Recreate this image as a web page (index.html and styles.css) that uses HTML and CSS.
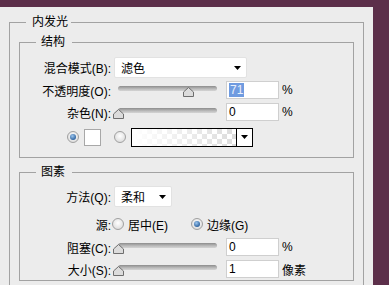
FILE: index.html
```html
<!DOCTYPE html>
<html lang="zh-CN">
<head>
    <meta charset="UTF-8">
    <title>内发光</title>
    <link rel="stylesheet" href="styles.css">
</head>
<body>

    <div class="panel">
        <fieldset class="group">
            <legend class="group-title">内发光</legend>

            <!-- 结构 -->
            <fieldset class="box box-structure">
                <legend class="box-title">结构</legend>

                <div class="row row-tall">
                    <span class="label">混合模式(B):</span>
                    <div class="select select-wide">
                        <span>滤色</span>
                        <svg class="caret" width="7" height="4" viewBox="0 0 7 4"><polygon points="0,0 7,0 3.5,4"/></svg>
                    </div>
                </div>

                <div class="row">
                    <span class="label">不透明度(O):</span>
                    <div class="slider">
                        <div class="track">
                            <svg class="thumb" style="left: 71%" width="11" height="10" viewBox="0 0 11 10"><path d="M5.5 0.5 L10.5 5 V9.5 H0.5 V5 Z"/></svg>
                        </div>
                    </div>
                    <div class="field"><span class="selected">71</span></div>
                    <span class="unit">%</span>
                </div>

                <div class="row">
                    <span class="label">杂色(N):</span>
                    <div class="slider">
                        <div class="track">
                            <svg class="thumb" style="left: 0%" width="11" height="10" viewBox="0 0 11 10"><path d="M5.5 0.5 L10.5 5 V9.5 H0.5 V5 Z"/></svg>
                        </div>
                    </div>
                    <div class="field">0</div>
                    <span class="unit">%</span>
                </div>

                <div class="row row-colors">
                    <span class="radio on"></span>
                    <span class="swatch"></span>
                    <span class="radio radio-gap"></span>
                    <div class="gradient">
                        <div class="gradient-fill"></div>
                        <div class="gradient-arrow">
                            <svg width="7" height="4" viewBox="0 0 7 4"><polygon points="0,0 7,0 3.5,4"/></svg>
                        </div>
                    </div>
                </div>
            </fieldset>

            <!-- 图素 -->
            <fieldset class="box box-elements">
                <legend class="box-title">图素</legend>

                <div class="row">
                    <span class="label">方法(Q):</span>
                    <div class="select select-narrow">
                        <span>柔和</span>
                        <svg class="caret" width="7" height="4" viewBox="0 0 7 4"><polygon points="0,0 7,0 3.5,4"/></svg>
                    </div>
                </div>

                <div class="row row-source">
                    <span class="label">源:</span>
                    <span class="radio radio-first"></span>
                    <span class="option">居中(E)</span>
                    <span class="radio on radio-second"></span>
                    <span class="option">边缘(G)</span>
                </div>

                <div class="row row-choke">
                    <span class="label">阻塞(C):</span>
                    <div class="slider">
                        <div class="track">
                            <svg class="thumb" style="left: 0%" width="11" height="10" viewBox="0 0 11 10"><path d="M5.5 0.5 L10.5 5 V9.5 H0.5 V5 Z"/></svg>
                        </div>
                    </div>
                    <div class="field">0</div>
                    <span class="unit">%</span>
                </div>

                <div class="row">
                    <span class="label">大小(S):</span>
                    <div class="slider">
                        <div class="track">
                            <svg class="thumb" style="left: 0%" width="11" height="10" viewBox="0 0 11 10"><path d="M5.5 0.5 L10.5 5 V9.5 H0.5 V5 Z"/></svg>
                        </div>
                    </div>
                    <div class="field">1</div>
                    <span class="unit">像素</span>
                </div>
            </fieldset>
        </fieldset>
    </div>

</body>
</html>
```

FILE: styles.css
```css
/* General Styles */
* {
    margin: 0;
    padding: 0;
    box-sizing: border-box;
}

body {
    background: #5c2f4a;
    padding-top: 7px;
    font: 12px "Liberation Sans", "Noto Sans CJK SC", sans-serif;
    color: #000;
}

.panel {
    width: 373px;
    height: 278px;
    background: #ececec;
    padding: 7px 0 0 9px;
    overflow: hidden;
}

/* Group boxes */
fieldset {
    border: 1px solid #a2a2a2;
    padding: 0;
    min-inline-size: 0;
}

legend {
    line-height: 16px;
    margin-left: 16px;
}

.group {
    width: 355px;
    padding-bottom: 30px;
}

.group-title {
    padding: 0 3px 0 6px;
}

.box {
    margin: 0 9px;
    padding-top: 5px;
}

.box-title {
    padding: 0 7px 0 5px;
}

.box-structure {
    margin-top: 4px;
    padding-bottom: 7px;
}

.box-elements {
    margin-top: 6px;
}

/* Rows */
.row {
    display: flex;
    align-items: center;
    height: 22px;
}

.row-tall {
    height: 24px;
}

.row-colors {
    height: 26px;
    margin-top: 1px;
    padding-left: 47px;
}

.row-source {
    margin-top: 6px;
}

.row-choke {
    margin-top: 1px;
}

.label {
    width: 91px;
    text-align: right;
    white-space: nowrap;
}

/* Dropdowns */
.select {
    display: flex;
    align-items: center;
    justify-content: space-between;
    height: 21px;
    margin-left: 3px;
    padding: 0 5px 0 6px;
    background: #fff;
    border: 1px solid #e2e2e2;
    border-radius: 2px;
}

.select-wide {
    width: 133px;
}

.select-narrow {
    width: 58px;
}

.caret {
    fill: #000;
    margin-top: 1px;
}

/* Sliders */
.slider {
    width: 109px;
    height: 14px;
    margin-left: 2px;
    padding: 3px 5px 0;
    align-self: center;
}

.track {
    position: relative;
    height: 5px;
    border-radius: 3px;
    background: linear-gradient(#8c8c8c, #bdbdbd 60%, #d4d4d4);
}

.thumb {
    position: absolute;
    top: 1px;
    margin-left: -5px;
    fill: #dcdcdc;
    stroke: #6e6e6e;
    stroke-width: 1;
}

/* Number fields */
.field {
    width: 53px;
    height: 18px;
    margin-left: 4px;
    padding-left: 2px;
    line-height: 16px;
    background: #fff;
    border: 1px solid #cfcfcf;
}

.selected {
    display: inline-block;
    padding: 0 1px;
    background: #6f9be0;
    color: #e8f0fc;
    line-height: 14px;
    margin-top: 1px;
}

.unit {
    margin-left: 3px;
}

/* Radios */
.radio {
    display: flex;
    align-items: center;
    justify-content: center;
    width: 12px;
    height: 12px;
    border-radius: 50%;
    border: 1px solid #a0a0a0;
    background: radial-gradient(circle at 50% 40%, #ffffff, #d4d4d4);
}

.radio.on::after {
    content: "";
    width: 6px;
    height: 6px;
    border-radius: 50%;
    background: radial-gradient(circle at 40% 35%, #9cc6ee, #2a5f9c 75%);
}

.radio-gap {
    margin-left: 13px;
}

.radio-first {
    margin-left: 1px;
}

.radio-second {
    margin-left: 23px;
}

.option {
    margin-left: 4px;
}

/* Colour pickers */
.swatch {
    width: 17px;
    height: 17px;
    margin-left: 5px;
    background: #fff;
    border: 1px solid #a8a8a8;
}

.gradient {
    display: flex;
    width: 122px;
    height: 19px;
    margin-left: 5px;
    border: 1px solid #000;
}

.gradient-fill {
    flex: 1;
    background:
        linear-gradient(to right, #fff, rgba(255, 255, 255, 0)),
        conic-gradient(#dcdcdc 25%, #fff 0 50%, #dcdcdc 0 75%, #fff 0);
    background-size: 100% 100%, 10px 10px;
}

.gradient-arrow {
    display: flex;
    align-items: center;
    justify-content: center;
    width: 16px;
    border-left: 1px solid #000;
    background: #fff;
}

.gradient-arrow svg {
    fill: #000;
}
```
